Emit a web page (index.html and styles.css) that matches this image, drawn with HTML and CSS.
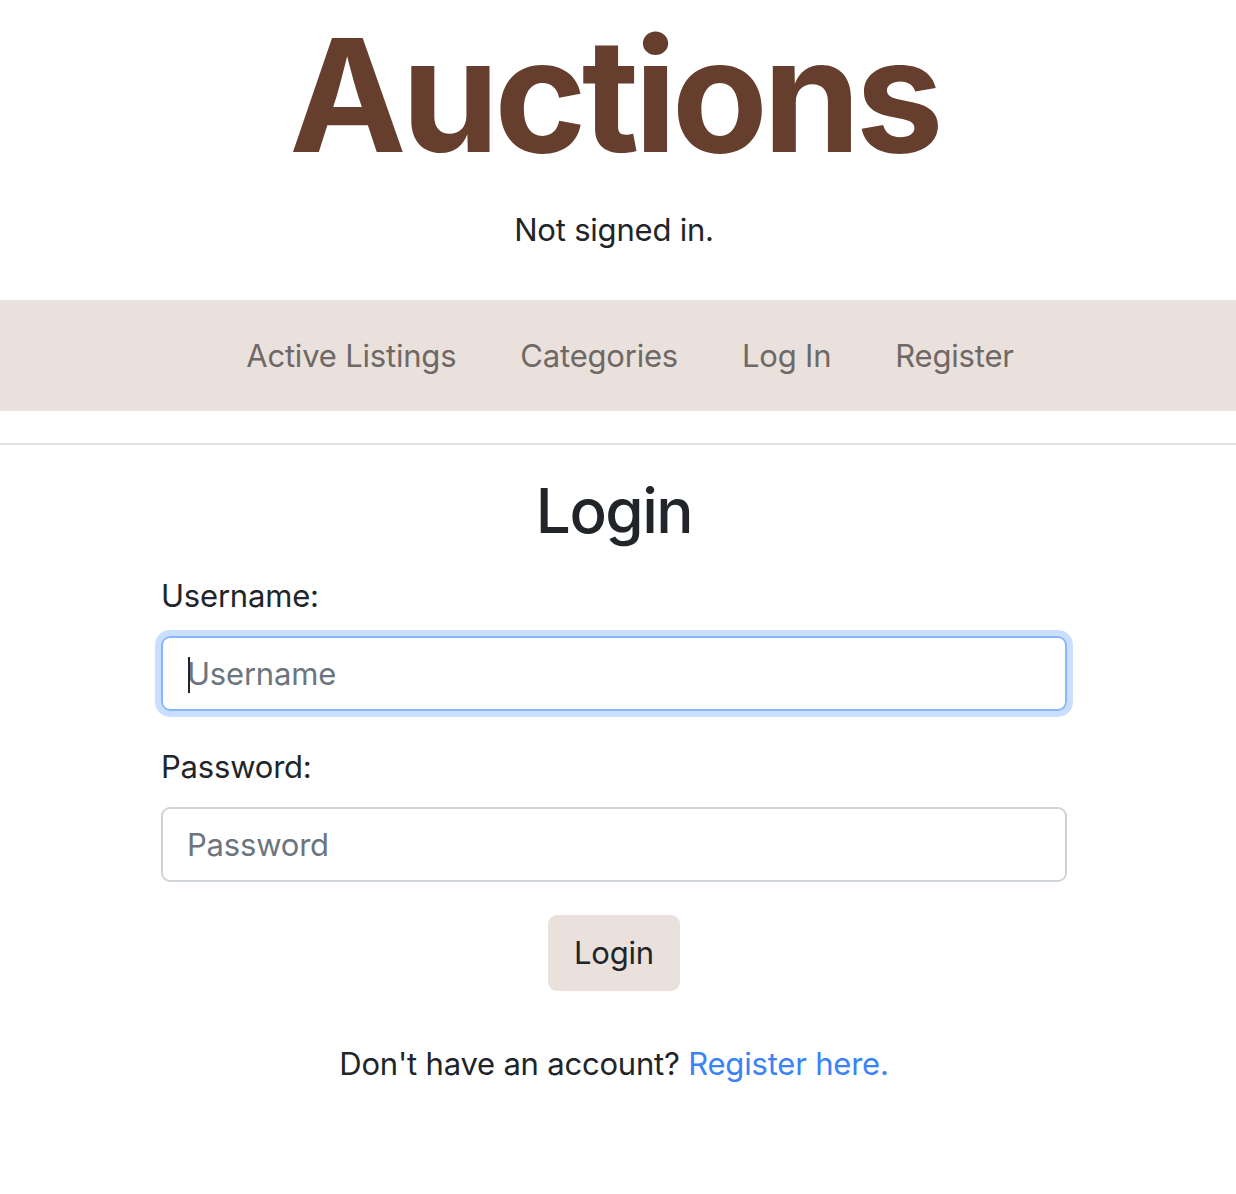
FILE: index.html
```html
<!DOCTYPE html>
<html lang="en">
<head>
<meta charset="utf-8">
<title>Auctions</title>
<link rel="stylesheet" href="styles.css">
</head>
<body>
<div class="page">
  <header class="masthead">
    <h1 class="brand">Auctions</h1>
    <p class="status">Not signed in.</p>
  </header>
  <nav class="navbar">
    <ul class="nav">
      <li><a class="nav-link" href="#">Active Listings</a></li>
      <li><a class="nav-link" href="#">Categories</a></li>
      <li><a class="nav-link" href="#">Log In</a></li>
      <li><a class="nav-link" href="#">Register</a></li>
    </ul>
  </nav>
  <hr class="divider">
  <main class="content">
    <h2 class="title">Login</h2>
    <form class="form">
      <div class="group">
        <label class="label" for="username">Username:</label>
        <div class="input focused"><span class="caret"></span><span class="placeholder">Username</span></div>
      </div>
      <div class="group">
        <label class="label" for="password">Password:</label>
        <div class="input"><span class="placeholder">Password</span></div>
      </div>
      <div class="actions">
        <button class="btn" type="button">Login</button>
      </div>
    </form>
    <p class="footnote">Don't have an account? <a class="link" href="#">Register here.</a></p>
  </main>
</div>
</body>
</html>
```
FILE: styles.css
```css
html, body {
  margin: 0;
  padding: 0;
  background: #fff;
}
body {
  font-family: Inter, "Liberation Sans", sans-serif;
  color: #212529;
  font-size: 31px;
  line-height: 48px;
  letter-spacing: -0.2px;
}
.page {
  width: 1236px;
}
.masthead {
  text-align: center;
  padding-right: 8px;
}
.brand {
  margin: 0;
  font-size: 157px;
  line-height: 190px;
  font-weight: 700;
  color: #653e2d;
  letter-spacing: -5px;
}
.status {
  margin: 16px 0 0 0;
  line-height: 48px;
}
.navbar {
  margin-top: 46px;
  background: #eae1dc;
  padding: 16px 8px 16px 0;
  height: 111px;
  box-sizing: border-box;
}
.nav {
  list-style: none;
  margin: 0;
  padding: 0 0 0 32px;
  display: flex;
  justify-content: center;
}
.nav-link {
  display: block;
  padding: 16px 32px;
  color: #6e6966;
  text-decoration: none;
  line-height: 48px;
}
.divider {
  margin: 32px 0 0 0;
  border: 0;
  border-top: 2px solid #e3e3e3;
  height: 0;
}
.content {
  padding: 0 169px 0 161px;
}
.title {
  margin: 28px 0 0 0;
  text-align: center;
  font-size: 62px;
  line-height: 76px;
  font-weight: 500;
  letter-spacing: -1.5px;
}
.group {
  display: flex;
  flex-direction: column;
}
.group + .group {
  margin-top: 32px;
}
.form {
  margin-top: 23px;
}
.label {
  margin-bottom: 16px;
}
.input {
  height: 75px;
  box-sizing: border-box;
  border: 2px solid #ced4da;
  border-radius: 9px;
  padding: 12px 24px;
  display: flex;
  align-items: center;
  position: relative;
}
.input.focused {
  border-color: #86b7fe;
  box-shadow: 0 0 0 6px rgba(13, 110, 253, 0.22);
}
.placeholder {
  color: #6c757d;
}
.caret {
  position: absolute;
  left: 25px;
  top: 19px;
  width: 2px;
  height: 36px;
  background: #212529;
}
.actions {
  display: flex;
  justify-content: center;
  margin-top: 33px;
}
.btn {
  font-family: inherit;
  font-size: 31px;
  letter-spacing: -0.2px;
  line-height: 48px;
  color: #212529;
  background: #eae1dc;
  border: 2px solid #eae1dc;
  border-radius: 9px;
  padding: 12px 24px;
  cursor: pointer;
}
.footnote {
  margin: 49px 0 0 0;
  text-align: center;
}
.link {
  color: #3b82f6;
  text-decoration: none;
}
```
